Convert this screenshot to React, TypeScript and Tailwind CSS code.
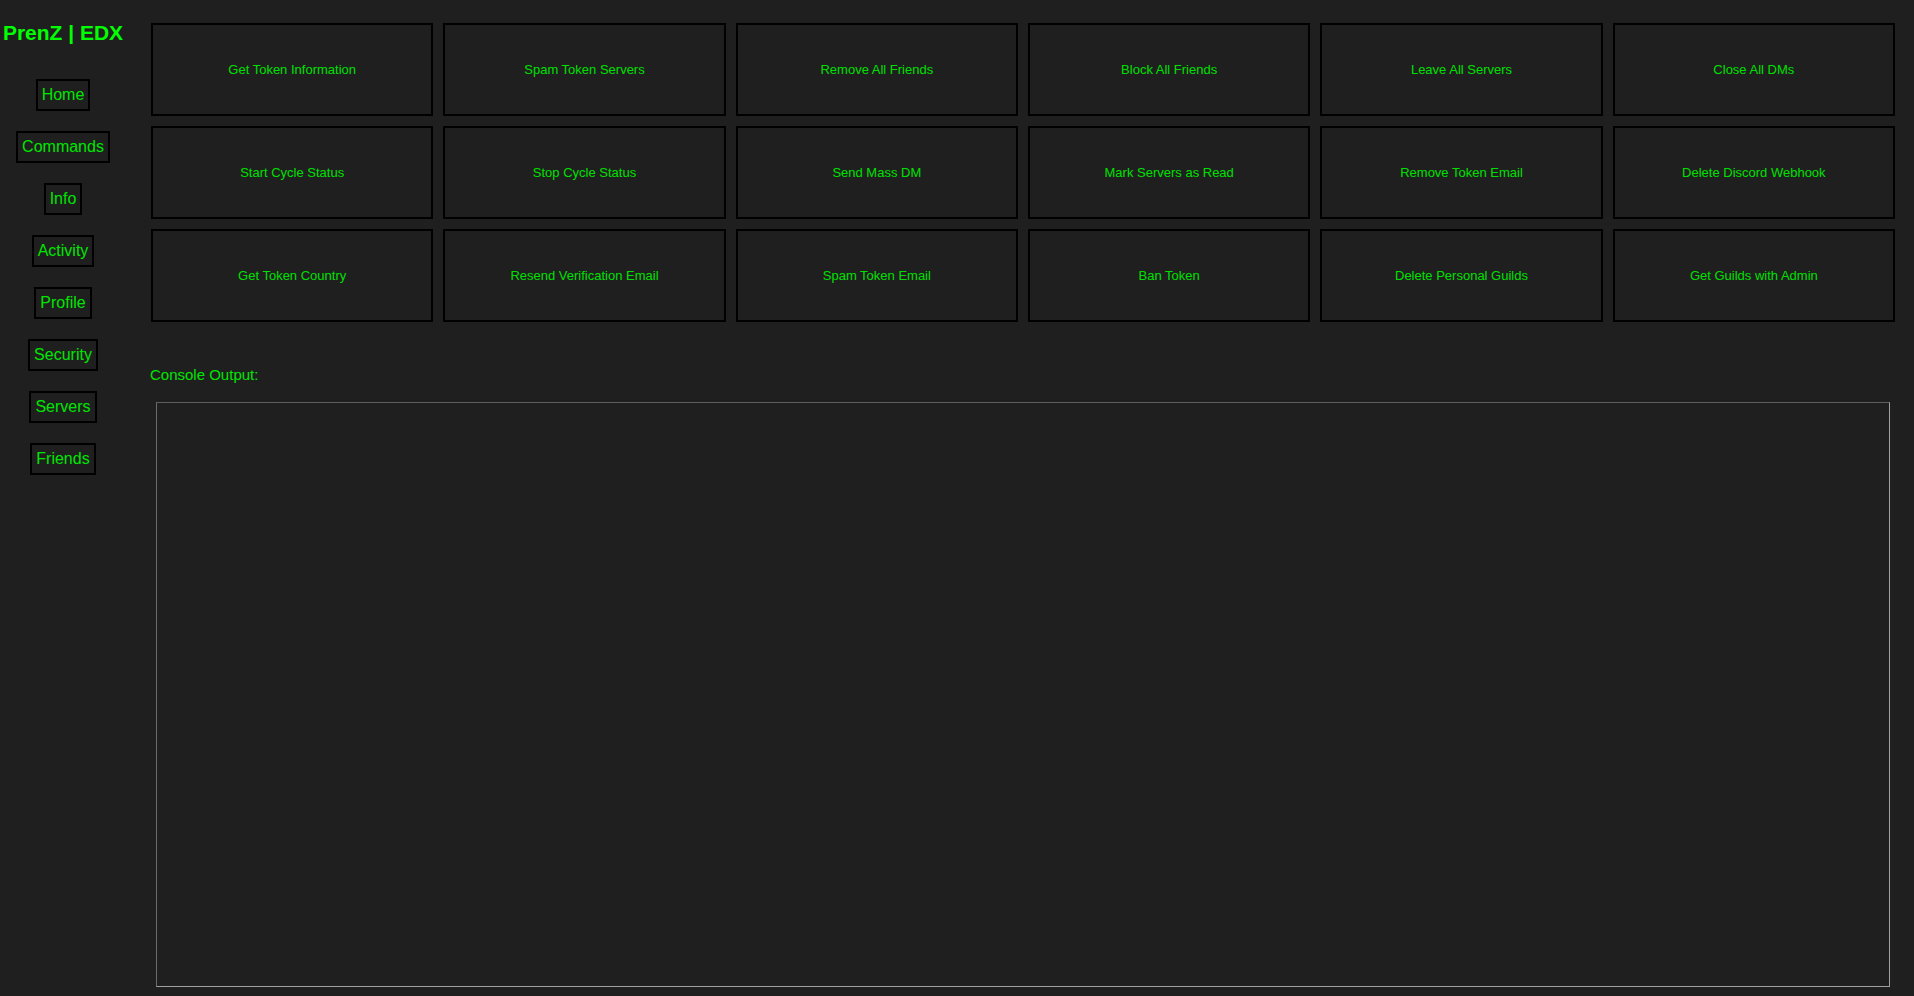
const navItems = ["Home", "Commands", "Info", "Activity", "Profile", "Security", "Servers", "Friends"];

const actions = [
  "Get Token Information",
  "Spam Token Servers",
  "Remove All Friends",
  "Block All Friends",
  "Leave All Servers",
  "Close All DMs",
  "Start Cycle Status",
  "Stop Cycle Status",
  "Send Mass DM",
  "Mark Servers as Read",
  "Remove Token Email",
  "Delete Discord Webhook",
  "Get Token Country",
  "Resend Verification Email",
  "Spam Token Email",
  "Ban Token",
  "Delete Personal Guilds",
  "Get Guilds with Admin",
];

export default function App() {
  return (
    <div
      className="flex w-[1914px] h-[996px] bg-[#1f1f1f] overflow-hidden"
      style={{ fontFamily: '"Liberation Sans", Arial, sans-serif' }}
    >
      {/* Sidebar */}
      <div className="w-[126px] shrink-0 flex flex-col items-center pt-[21px]">
        <div className="text-[21px] leading-[24px] font-bold text-[#00ff00] whitespace-nowrap">PrenZ | EDX</div>
        <div className="flex flex-col items-center gap-[20px] mt-[34px]">
          {navItems.map((item) => (
            <button
              key={item}
              className="border-2 border-black bg-[#1f1f1f] px-[4px] py-[4px] text-[16px] leading-[20px] text-[#00e600]"
            >
              {item}
            </button>
          ))}
        </div>
      </div>

      {/* Main */}
      <div className="flex-1 flex flex-col pl-[25px] pr-[19px] pt-[23px]">
        <div className="grid grid-cols-6 gap-[10px]">
          {actions.map((label) => (
            <button
              key={label}
              className="h-[93px] border-2 border-black bg-[#1f1f1f] flex items-center justify-center text-[13px] text-[#00e000]"
            >
              {label}
            </button>
          ))}
        </div>

        <div className="mt-[44px] -ml-[1px] text-[15px] leading-[18px] text-[#00e600]">Console Output:</div>

        <div className="mt-[18px] mx-[5px] h-[585px] border border-t-[#5e5e5e] border-l-[#6a6a6a] border-b-[#a0a0a0] border-r-[#a0a0a0] bg-[#1f1f1f]" />
      </div>
    </div>
  );
}
